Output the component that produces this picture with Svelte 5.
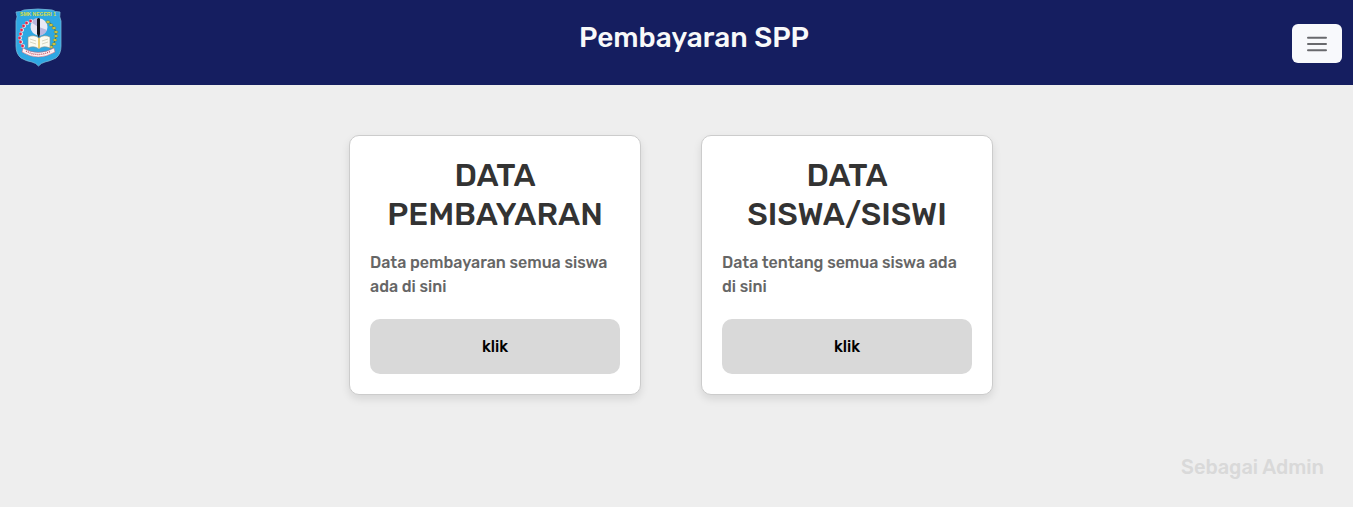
<script>
  const cards = [
    { title: 'DATA PEMBAYARAN', text: 'Data pembayaran semua siswa ada di sini' },
    { title: 'DATA SISWA/SISWI', text: 'Data tentang semua siswa ada di sini' }
  ];
  const cotton = [
    [17, 13], [13, 15], [10, 18], [8, 22], [7, 26], [6, 30], [7, 34], [9, 38]
  ];
  const rice = [
    [34, 14], [37, 17], [40, 20], [42, 24], [42, 28], [41, 32], [40, 36], [37, 39]
  ];
</script>

<header>
  <a class="logo" href="#home" aria-label="SMK Negeri 1">
    <svg width="48" height="60" viewBox="0 0 48 60" aria-hidden="true">
      <path d="M2 4Q7 4 10 2Q24 0 38 2Q41 4 46 4Q45 9 47 13V38Q47 46 42 50Q36 53 31 54Q27 55 24.500 58Q22 55 18 54Q12 53 7 50Q2 46 2 38V13Q4 9 2 4Z" fill="#2ea8e3" stroke="#78b7d6" stroke-width=".8" />
      <text x="24" y="8" text-anchor="middle" class="crest">SMK NEGERI 1</text>
      <circle cx="25" cy="19" r="8.500" fill="#e9e8f6" />
      <path d="M24 19L17 14Q20 10 24 10ZM25 19L33 22Q31 27 25 28Z" fill="#b9b7df" />
      {#each cotton as [x, y]}
        <circle cx={x} cy={y} r="2" fill="#f0e8ee" />
        <circle cx={x - 0.5} cy={y} r="1.400" fill="#e0284c" />
      {/each}
      <path d="M34 13Q43 20 42 29Q41 36 36 40" fill="none" stroke="#35724c" stroke-width="1" />
      {#each rice as [x, y]}
        <ellipse cx={x} cy={y} rx="2" ry="1.300" fill="#dccb3f" stroke="#58743b" stroke-width=".4" />
      {/each}
      <path d="M14 29Q20 26 25 30Q30 26 36 29V40Q29 37 25 41Q20 37 14 40Z" fill="#fbfaf0" stroke="#8c8e85" stroke-width=".6" />
      <path d="M16 31L22 33M16 34L22 36M28 33L34 31M28 36L34 34" stroke="#c8c7af" stroke-width=".7" />
      <path d="M23 11Q25 9 26 11V26L25 30L23 26Z" fill="#14151d" />
      <path d="M25 30V40" stroke="#e2b82c" stroke-width="1.300" />
      <path d="M9 40Q24 49 40 40L41 44Q24 54 8 44Z" fill="#fbf4f5" stroke="#d0596d" stroke-width=".5" />
      <path d="M12 43Q24 50 37 43" fill="none" stroke="#c54b62" stroke-width="1.400" stroke-dasharray="1 1" />
    </svg>
  </a>
  <h1>Pembayaran SPP</h1>
  <button class="menu" aria-label="Menu">
    <svg width="24" height="24" viewBox="0 0 24 24" aria-hidden="true">
      <path d="M3 5.700H21M3 12H21M3 18.300H21" />
    </svg>
  </button>
</header>

<main>
  {#each cards as card}
    <section>
      <h2>{card.title}</h2>
      <p>{card.text}</p>
      <button class="action">klik</button>
    </section>
  {/each}
</main>
<footer>Sebagai Admin</footer>

<style>
  :global(body) {
    margin: 0;
    background: #eee;
    font-family: Rubik, Roboto, sans-serif;
    font-weight: 500;
  }
  header {
    display: flex;
    justify-content: space-between;
    align-items: flex-start;
    box-sizing: border-box;
    min-height: 85px;
    padding: 8px 11px 0 14px;
    background: #151e60;
  }
  .logo { width: 82px; }
  .logo svg { display: block; }
  .crest {
    font: bold 5px "Liberation Sans", sans-serif;
    fill: #d9df42;
  }
  h1 {
    margin: 13px 0 0;
    font-size: 28px;
    line-height: 34px;
    font-weight: 500;
    color: #f8f9fa;
  }
  .menu {
    display: grid;
    place-items: center;
    width: 50px;
    height: 39px;
    margin-top: 16px;
    padding: 0;
    border: 0;
    border-radius: 6px;
    background: #f8f9fc;
  }
  .menu path {
    stroke: #68696d;
    stroke-width: 2;
    stroke-linecap: round;
  }
  main {
    display: flex;
    flex-wrap: wrap;
    justify-content: center;
    gap: 60px;
    padding: 50px 11px 60px 0;
  }
  section {
    width: 250px;
    padding: 20px;
    border: 1px solid #ccc;
    border-radius: 10px;
    background: #fff;
    box-shadow: 0 4px 8px rgba(0, 0, 0, 0.1);
  }
  h2 {
    margin: 0 0 17px;
    font-size: 32px;
    line-height: 39px;
    font-weight: 500;
    text-align: center;
    color: #333;
  }
  p {
    margin: 0 0 20px;
    font-size: 16px;
    line-height: 24px;
    color: #666;
  }
  .action {
    width: 100%;
    height: 55px;
    border: 0;
    border-radius: 10px;
    background: #d9d9d9;
    font: inherit;
    font-size: 16px;
    color: #000;
  }
  footer {
    padding: 0 29px 28px;
    text-align: right;
    font-size: 20px;
    line-height: 24px;
    color: #d9d9d9;
  }
</style>
